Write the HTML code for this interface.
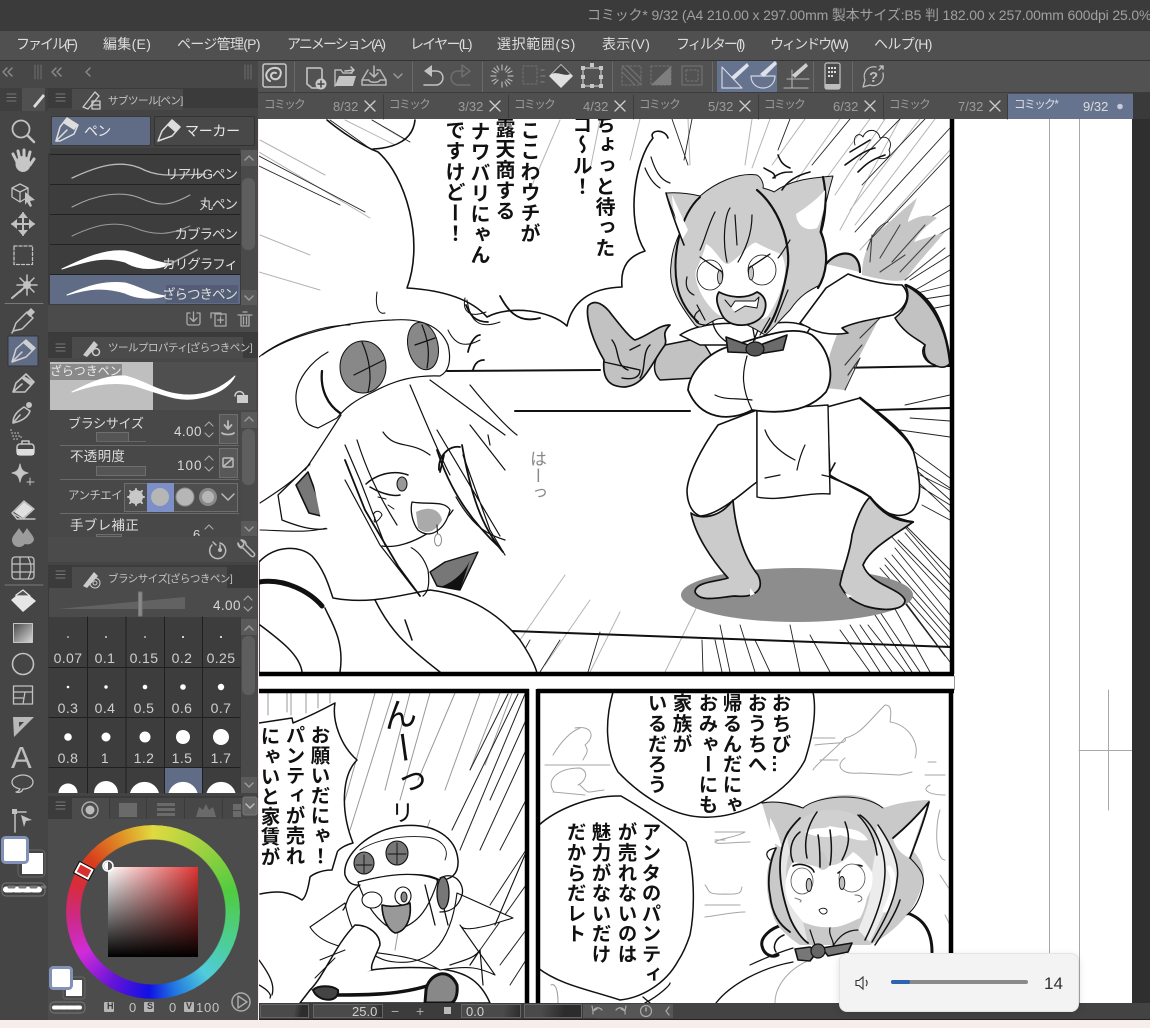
<!DOCTYPE html>
<html lang="ja"><head><meta charset="utf-8"><title>CLIP STUDIO PAINT</title>
<style>
html,body{margin:0;padding:0;background:#f7eeec}
#r{position:relative;width:1150px;height:1028px;overflow:hidden;background:#f7eeec;font-family:"Liberation Sans","Noto Sans CJK JP",sans-serif}
#r div{position:absolute;white-space:nowrap}
.b{box-sizing:border-box}
.t{color:#d8d8d8;line-height:1;transform-origin:0 50%}
.m{top:37px;font-size:14px;color:#dcdcdc}
.tb{top:100px;font-size:11.500px;letter-spacing:-1.400px;color:#9c9c9c}
.tn{top:100px;font-size:13px;letter-spacing:0;color:#9c9c9c}
.ph{font-size:10.500px;color:#c4c4c4;letter-spacing:-.5px}
.br{left:60px;width:177px;text-align:right;font-size:13.500px;letter-spacing:-1px;color:#dedede}
.n{font-size:14px;color:#cfcfcf;width:38px;text-align:center;letter-spacing:.4px}
.v{writing-mode:vertical-rl;font-family:"Liberation Sans","Noto Sans CJK JP",sans-serif;font-weight:700;color:#111;line-height:24px;width:24px}
.p1{font-size:20px;letter-spacing:.6px}
.p2{font-size:19.500px;letter-spacing:.6px}
.p3{font-size:19.500px;letter-spacing:.8px}
</style></head><body>
<div id="r">

<!-- chrome backgrounds -->
<div style="left:0;top:0;width:1150px;height:31px;background:#3b3b3b"></div>
<div style="left:0;top:31px;width:1150px;height:29px;background:#505050"></div>
<div style="left:0;top:60px;width:1150px;height:1px;background:#333"></div>
<div style="left:0;top:61px;width:258px;height:27px;background:#474747"></div>
<div style="left:258px;top:61px;width:892px;height:32px;background:#525252"></div>
<div style="left:258px;top:93px;width:892px;height:26px;background:#4f4f4f"></div>
<div style="left:1133px;top:93px;width:17px;height:26px;background:#3a3a3a"></div>

<!-- CANVAS -->
<div style="left:259px;top:119px;width:873px;height:884px;overflow:hidden;background:#fff">
<div style="left:-259px;top:-119px;width:1150px;height:1028px">
<svg width="1150" height="1028" viewBox="0 0 1150 1028" style="position:absolute;left:0;top:0" fill="none" stroke="#111" stroke-linejoin="round" stroke-linecap="round">
<!-- guides -->
<g stroke="#a8a8a8" stroke-width="1"><path d="M1049.500 119V1003M1079.500 119V1003M1108.500 690V810M1079 750.500H1132"/><path d="M954.500 676V690" stroke="#999"/></g>

<!-- PANEL 1 speed lines -->
<g stroke="#b4b4b4" stroke-width="1">
<path d="M260 140L325 175M259 152L370 218M260 235L310 255M259 272L320 290M372 120L405 140M345 120L395 145M560 120L530 190M600 120L590 170M640 119L630 160M688 119L690 165M752 119L745 165M770 119L752 168M805 119L772 165M840 119L790 190M900 119L840 230M920 119L850 210M950 150L860 250M565 575L520 640M590 600L545 665M705 590L665 672M620 612L590 672M870 119L825 180M885 119L835 195M935 119L855 225"/>
</g>
<g stroke="#222" stroke-width=".9">
<path d="M259 156L365 212M259 166L340 205M330 120L372 150M372 120L410 142M672 119L688 165M692 119L684 160M790 119L778 150M850 119L812 165M900 119L860 160M925 119L862 185M950 128L855 232M950 155L870 240M950 205L895 240M950 228L905 255M950 255L910 280M950 270L905 296M950 285L905 296M950 295L905 302M950 305L900 315M950 395L905 405M950 421L910 418M950 437L900 430M912 450L950 478M920 475L950 490M905 460L950 500M905 470L950 512M922 505L950 520M915 465L950 488M910 480L950 505M900 520L950 570M905 533L950 585M890 535L950 600M895 548L950 615M885 558L950 632M880 568L948 646M895 590L945 656M890 600L930 672M880 612L920 672M868 625L905 672M850 625L880 672M840 630L870 672M810 635L830 672M790 625L800 672M755 640L770 672M740 625L755 672M720 625L730 672M715 640L722 672M702 640L703 672M600 632L588 672M560 640L540 672M530 640L512 672M905 527L950 578M898 540L950 592M892 555L950 625M885 565L950 640M900 595L950 662M875 615L912 672M860 625L892 672"/>
</g>
<!-- wall & floor lines -->
<g stroke="#111" stroke-width="2">
<path d="M447 371L600 370M515 411L690 411M835 368L950 366M835 411L950 408" stroke-width="2"/>
<path d="M512 631L950 647" stroke-width="2"/>
</g>

<!-- panel-1 balloon -->
<path d="M327 120C345 135 365 147 378 152C405 175 425 240 407 288C440 290 470 298 487 317C510 305 550 310 567 326C572 302 590 288 622 287C620 265 630 256 645 251C625 220 635 160 653 138C648 130 665 128 668 138" stroke-width="1.600"/>
<path d="M373 149C395 148 413 140 415 120" stroke-width="1.600"/>
<path d="M377 292C375 305 378 315 385 313M465 298C462 312 470 318 486 312" stroke-width="1"/>

<!-- left girl (body) -->
<path d="M259 562C275 545 300 545 312 556C325 570 330 590 333 598C370 605 400 595 430 590C470 595 500 615 520 640C530 655 535 665 537 673L259 673Z" fill="#fff" stroke-width="1.500"/>
<path d="M259 582C285 578 310 592 322 606" stroke-width="5"/>
<path d="M260 625C280 640 300 655 302 672M340 672C345 640 330 620 325 608M375 600C390 630 405 645 440 672M405 620L412 640" stroke-width="1.500"/>
<path d="M478 552L445 562L430 572L437 586L460 590Z" fill="#777" stroke-width="1.400"/>
<path d="M440 587C455 582 466 570 470 560L460 590Z" fill="#111" stroke="none"/>
<path d="M382 546C400 540 420 545 428 570C430 585 428 592 423 596" stroke-width="1.200"/>
<!-- headphone -->
<path d="M278 495L310 464C320 490 335 510 337 525C320 535 295 525 282 520Z" fill="#fff" stroke-width="1.300"/>
<path d="M296 485L308 472L325 517L309 513Z" fill="#777" stroke-width="1.600"/>
<path d="M260 503C280 490 295 480 310 464M260 530C280 530 310 535 337 525" stroke-width="1.100"/>
<!-- hair & face -->
<path d="M336 412L310 465L322 525L380 565C410 550 440 530 456 505L495 505L430 400Z" fill="#fff" stroke="none"/>
<path d="M341 415C325 440 312 460 305 470M345 480L380 545L415 590M345 445L360 480L385 545M357 440C365 465 375 490 397 525M383 432C395 450 410 440 430 455M410 385C425 420 437 450 450 475M437 430L500 536M470 385C490 410 510 430 517 435M430 380L505 435M488 435L490 445M470 425L505 470M463 455L490 530L505 555M456 497C475 530 490 535 505 540" stroke-width="1.200"/>
<path d="M345 460L365 510L398 566L420 596M437 450C450 490 470 520 500 548M462 445C470 490 480 525 503 552" stroke-width="1.800"/>
<path d="M382 546C405 550 440 530 453 510" stroke-width="1.300"/>
<!-- eye, mouth -->
<path d="M366 484C378 473 395 470 408 475M370 487C378 492 392 497 400 495" stroke-width="1.500"/>
<ellipse cx="402" cy="484" rx="5" ry="7" fill="#999" stroke-width="1"/>
<path d="M439 470C438 455 450 445 460 447M440 472L444 455" stroke-width="1.800"/>
<path d="M412 502C428 505 445 500 450 510C445 530 430 540 418 530C412 522 410 510 412 502Z" fill="#fff" stroke-width="1.300"/>
<path d="M416 512C430 505 440 510 442 520C435 533 425 535 418 528Z" fill="#aaa" stroke="none"/>
<path d="M437 525L438 545" stroke-width="1"/><ellipse cx="438" cy="540" rx="3.500" ry="6" fill="#fff" stroke="#888" stroke-width="1"/>
<path d="M375 518C370 512 380 508 382 515C378 522 372 525 375 518M388 505L394 509M378 497L386 499" stroke-width="1"/>
<!-- hat -->
<path d="M262 355C290 335 340 322 392 320C420 318 440 325 448 345C452 362 448 372 440 376C415 375 395 380 373 392C355 400 345 408 337 418L318 428C305 425 295 415 296 395C297 380 310 362 328 352" fill="#fff" stroke-width="1.200"/>
<path d="M259 357C280 340 320 325 350 325" stroke-width="1"/>
<ellipse cx="363" cy="367" rx="23" ry="26" fill="#888" stroke-width="1"/>
<ellipse cx="423" cy="346" rx="15" ry="24" fill="#888" stroke-width="1" transform="rotate(-12 423 346)"/>
<path d="M354 375L384 360M362 342C370 360 372 378 368 392M415 345L435 338M422 325C428 340 430 352 427 368" stroke-width="1.200"/>
<path d="M322 371C320 390 328 405 340 413" stroke-width="2.300"/>
<path d="M448 330C455 345 465 348 480 340M467 300C470 320 478 330 500 322" stroke-width="1"/>
<path d="M466 305C470 315 475 322 488 322M468 352C470 342 476 335 480 335M473 370C475 362 480 360 484 360" stroke-width="1.800"/>
<path d="M500 296C505 305 515 325 540 318" stroke-width="1.800"/>

<!-- RIGHT CAT GIRL -->
<ellipse cx="797" cy="595" rx="116" ry="27" fill="#8d8d8d" stroke="none"/>
<!-- tail -->
<path d="M862 275C862 260 866 245 878 232C888 224 900 212 917 198C912 212 908 218 908 222C920 215 930 214 937 218C926 226 918 234 914 242C925 238 935 236 945 232C930 250 918 262 905 280C895 282 885 280 875 278Z" fill="#c6c6c6" stroke="none"/>
<path d="M867 250C872 235 878 225 888 222M880 258L900 225M892 262L925 225M900 272L935 235M880 272L905 255M870 262L872 235M905 280L945 248" stroke="#444" stroke-width="1.100"/>
<path d="M826 264C840 248 860 250 860 272" fill="#c6c6c6" stroke-width="2.200"/>
<!-- back -->
<path d="M843 320L885 305C875 330 855 360 845 390L825 388C825 360 835 340 843 320Z" fill="#bfbfbf" stroke="none"/>
<path d="M848 325L878 312M860 338L880 318M845 365L862 345M848 375L860 358M845 390L860 358" stroke="#333" stroke-width="1.100"/>
<!-- arm right -->
<path d="M826 288L848 274C870 282 890 285 902 285C912 295 906 308 893 315C870 320 855 322 842 328C845 331 848 333 848 333C830 336 815 333 800 323Z" fill="#fff" stroke-width="1.600"/>
<path d="M905 285C925 295 945 320 950 362C950 365 945 368 940 367C930 365 922 358 925 345C920 340 905 335 895 318C905 310 912 297 905 285Z" fill="#c2c2c2" stroke-width="1.600"/>
<path d="M906 285C930 295 945 320 950 362" stroke-width="2.500"/>
<path d="M925 345C920 352 924 362 935 365" stroke-width="1.600"/>
<!-- legs -->
<path d="M718 425C700 450 688 475 687 490C687 500 690 512 700 516C720 515 745 490 757 482L757 410Z" fill="#fff" stroke-width="1.600"/>
<path d="M827 407L860 398C885 420 905 435 913 450C920 475 922 495 916 505C910 520 885 520 870 497C855 488 840 482 830 475Z" fill="#fff" stroke-width="1.600"/>
<path d="M860 398C885 418 905 432 913 450" stroke-width="2.500"/>
<path d="M835 463L828 476C840 482 860 488 870 497" stroke-width="1.600"/>
<!-- apron -->
<path d="M757 410L757 497C780 502 805 492 830 494L828 405Z" fill="#fff" stroke-width="1.400"/>
<path d="M765 430C770 445 785 455 795 460M805 445C800 455 798 465 797 470M765 478L780 475M822 475L835 478" stroke-width="1.200"/>
<!-- boots -->
<path d="M691 513C700 520 720 518 733 500C735 525 742 555 758 575C765 590 755 598 735 596C720 597 700 603 695 592C695 582 715 582 728 578C712 560 695 535 691 513Z" fill="#cbcbcb" stroke-width="1.700"/>
<path d="M870 497C880 512 895 522 913 522C895 535 870 548 863 565C870 585 900 588 905 600C905 610 885 612 865 606C850 600 845 595 840 585C842 570 850 555 852 535C856 520 862 505 870 497Z" fill="#cbcbcb" stroke-width="1.700"/>
<path d="M870 497C880 510 895 520 913 522" stroke-width="2.300"/>
<path d="M750 588L755 594L750 596ZM845 593L848 598L852 596Z" fill="#fff" stroke="none"/>
<!-- left arm, hand -->
<path d="M665 345L700 338C705 345 712 355 714 362L695 378L660 380C650 370 655 355 665 345Z" fill="#c2c2c2" stroke-width="1.500"/>
<path d="M588 306C595 298 605 305 612 315C620 325 630 338 635 340C650 335 658 325 670 325C660 335 668 338 665 345C650 365 645 385 625 387C610 387 602 380 604 360C595 345 585 320 588 306Z" fill="#c2c2c2" stroke-width="1.700"/>
<path d="M612 340C620 350 615 365 628 370M604 362L640 370C640 378 632 380 622 378M650 345C642 352 646 370 640 378M640 345L630 350" stroke-width="1.400"/>
<!-- chest and collar -->
<path d="M680 335C700 322 730 322 760 325C780 322 795 320 810 328L800 345H700Z" fill="#fff" stroke-width="1.500"/>
<path d="M688 390C690 370 710 350 735 345C765 335 795 325 812 335C830 350 835 375 826 392C810 410 785 415 752 410C730 422 700 420 688 390Z" fill="#fff" stroke-width="1.800"/>
<path d="M747 356C743 370 740 385 752 410M715 395C725 400 735 398 752 400" stroke-width="1.200"/>
<path d="M716 312C705 325 725 345 735 345M751 318L755 340M760 325L752 345" stroke-width="1.300"/>
<!-- hair -->
<path d="M666 193C680 192 692 194 700 196C715 183 738 172 757 175C762 178 764 185 763 188C770 190 775 192 774 192C790 180 810 178 833 176C826 200 823 215 820 232C828 250 828 270 820 285C810 290 800 295 790 310C780 320 772 330 765 335C745 322 725 315 715 320C705 325 700 330 695 325C680 305 668 288 671 265C672 250 678 235 682 230C675 218 670 205 666 193Z" fill="#cdcdcd" stroke-width="1"/>
<path d="M700 197C680 215 672 255 677 285C680 302 690 315 698 322" stroke-width="2"/>
<path d="M757 190C775 205 790 235 788 265C785 285 778 315 765 332" stroke-width="2.200"/>
<path d="M823 177C827 195 826 215 821 232C830 255 826 275 818 288" stroke-width="2.200"/>
<path d="M796 214C810 205 818 198 825 190C825 205 822 220 817 228C805 232 797 225 796 214Z" fill="#fff" stroke="none"/>
<path d="M672 195L688 230L682 240C678 225 672 210 672 195Z" fill="#fff" stroke="none"/>
<path d="M666 193C672 215 680 235 684 245" stroke-width="1.600"/>
<!-- face -->
<path d="M706 244C715 248 722 265 728 264C740 258 752 240 757 243C772 252 782 252 783 258C790 275 778 300 768 316C755 325 725 322 715 312C702 300 693 280 696 270C700 262 704 252 706 244Z" fill="#fff" stroke="none"/>
<path d="M727 262C722 240 725 215 730 208M738 262C745 250 752 235 752 215M735 215L737 245M700 250C705 240 708 225 715 212M790 240C784 250 780 256 778 258M788 290L775 322M770 318L760 335M697 305L705 320" stroke-width="1.200"/>
<ellipse cx="710" cy="275" rx="13" ry="15" fill="#fff" stroke-width=".8"/>
<ellipse cx="762" cy="270" rx="14" ry="15" fill="#fff" stroke-width=".8"/>
<ellipse cx="720" cy="277" rx="2.500" ry="7" fill="#c6c6c6" stroke-width=".8"/>
<ellipse cx="751" cy="273" rx="2.500" ry="7" fill="#c6c6c6" stroke-width=".8"/>
<path d="M700 257L722 272M749 268L770 254" stroke-width="1.300"/>
<path d="M719 292C728 297 745 300 757 292C766 296 768 305 763 315C755 327 730 330 722 315C717 305 715 298 719 292Z" fill="#cdcdcd" stroke-width="1.800"/>
<path d="M725 300L731 307L735 301L755 301L759 297L757 308L745 306L735 312" fill="#fff" stroke-width="1"/>
<path d="M687 277C685 285 687 292 694 295" stroke-width="1.200"/>
<path d="M700 310C690 316 695 325 705 325" stroke-width="1.200"/>
<!-- bow -->
<path d="M726 337L748 345L752 353L728 352Z" fill="#6b6b6b" stroke-width="1.600"/>
<path d="M787 335L760 345L758 354L783 350Z" fill="#6b6b6b" stroke-width="1.600"/>
<ellipse cx="755" cy="349" rx="9" ry="7" fill="#555" stroke-width="1.200"/>
<!-- anger puff & marks -->
<path d="M855 145C852 135 860 132 863 137C866 128 878 128 880 138C888 135 893 142 889 150C893 158 882 160 878 158" stroke-width=".9"/>
<path d="M845 165C855 158 865 150 875 148M858 172C865 165 870 160 885 155M850 152L870 140" stroke-width="1.600"/>
<path d="M778 155C780 160 782 165 790 168M764 168C770 172 775 172 775 178M782 190C788 180 798 175 810 172M773 178C780 172 786 172 792 172" stroke-width="1.600"/>
<path d="M651 157C655 170 660 180 670 183M645 168C650 180 655 185 660 188" stroke-width="1.200"/>

<!-- panel 1 borders -->
<path d="M952 119V674M259 674H954" stroke="#000" stroke-width="4.500" stroke-linecap="butt"/>

<!-- PANEL 2 -->
<g stroke="#999" stroke-width="1"><path d="M268 693V715M287 693V712M291 693V715M306 693V713M318 693V708M330 693V703M375 693L345 800M393 693L350 830M410 693L385 790M430 693L400 800M455 693L418 780M480 693L445 790M500 693L470 770M512 693L485 765M430 820L405 890L395 950"/></g>
<g stroke="#222" stroke-width="1"><path d="M525 694L460 850M518 694L452 830M508 694L470 770M526 720L490 800M526 750L480 850M526 800L500 850M526 850L490 905M526 885L480 950M526 930L500 965M526 960L510 985"/></g>
<path d="M259 723L292 718L293 723C310 716 322 710 335 703C332 720 340 745 357 760C342 775 340 810 353 843C345 845 337 850 337 853L332 870C320 870 312 875 310 877C308 890 305 898 302 900C290 892 280 890 260 894" stroke-width="1.500" fill="#fff"/>
<path d="M259 960C270 975 275 985 272 995M259 985C268 990 272 995 270 998" stroke-width="1.300"/>
<!-- girl 2 -->
<path d="M310 990C340 975 370 965 430 968C465 970 480 980 490 1003H300Z" fill="#fff" stroke-width="1.500"/>
<path d="M310 927L345 903C352 940 370 960 395 962C425 965 450 950 457 893L513 918L490 925C470 930 462 930 460 925L495 975C480 968 470 965 440 970C400 945 330 960 310 927Z" fill="#fff" stroke-width="1.100"/>
<path d="M345 875C342 855 370 830 400 826C435 822 456 838 458 860C459 875 450 880 440 880C420 870 395 875 360 885C350 886 347 880 345 875Z" fill="#fff" stroke-width="1.500"/>
<path d="M360 850C375 840 400 835 425 837C440 838 450 848 445 860" stroke-width=".9"/>
<ellipse cx="364" cy="863" rx="10" ry="11" fill="#777" stroke-width="1.100"/>
<ellipse cx="397" cy="853" rx="11" ry="12" fill="#777" stroke-width="1.100"/>
<path d="M356 865H372M364 855V873M388 854H406M397 843V864" stroke-width=".9"/>
<path d="M358 882C365 905 380 925 395 930C420 925 430 905 438 880C415 870 385 875 358 882Z" fill="#fff" stroke-width="1.200"/>
<ellipse cx="372" cy="900" rx="10" ry="8" fill="#fff" stroke-width="1.100"/>
<ellipse cx="403" cy="896" rx="8" ry="9" fill="#fff" stroke-width="1.100"/>
<ellipse cx="404" cy="897" rx="3" ry="5" fill="#888" stroke-width="1"/>
<path d="M382 905C392 908 405 905 410 903C412 920 405 932 395 933C388 930 382 918 382 905Z" fill="#999" stroke-width="1.600"/>
<path d="M437 880L448 925M425 885L435 925M360 885C345 895 348 905 343 910" stroke-width="1.300"/>
<ellipse cx="443" cy="893" rx="6" ry="16" fill="#777" stroke-width="1.300"/>
<path d="M440 878C455 870 465 885 462 895C458 908 450 912 440 912" stroke-width="1.300"/>
<path d="M310 990C325 975 335 945 355 925C370 925 380 935 380 945C375 958 370 965 372 970" fill="#fff" stroke-width="1.500"/>
<path d="M315 978L335 958M320 960L345 950" stroke-width="1"/>
<path d="M527 850L495 925" stroke-width="1.100"/>
<path d="M338 995C365 995 400 995 430 985" stroke-width="3.500"/>
<path d="M313 990C318 1003 340 1003 338 990C332 985 318 985 313 990Z" fill="#444" stroke-width="2"/>
<path d="M426 990C428 975 448 965 457 985C458 995 455 1003 450 1003H425Z" fill="#888" stroke-width="3"/>
<path d="M470 965L480 950L483 985M450 965C465 960 475 958 480 950" stroke-width="1.200"/>

<path d="M527 689V1004M259 691H529" stroke="#000" stroke-width="4.500" stroke-linecap="butt"/>

<!-- PANEL 3 -->
<g stroke="#a5a5a5" stroke-width="1">
<path d="M575 728C590 725 597 735 585 745C590 752 585 755 583 760M553 755C565 735 575 730 580 728M545 765L610 765M554 792C545 780 558 768 580 768C590 772 585 782 578 785M553 792L585 795M580 785C590 795 585 792 604 790"/>
<path d="M815 745C835 742 848 745 845 738C860 735 868 722 885 705C890 705 892 708 890 722C910 725 920 745 915 758M813 770C815 765 840 745 845 738M845 758C835 765 840 775 860 773L900 775L912 772M813 738H835M820 760H838M928 762L936 762M925 775L945 775M930 785C920 790 930 795 945 795M715 832H745C735 838 720 838 715 842C715 845 735 842 750 842M715 840L725 840M705 885C710 890 705 895 725 894C745 895 740 890 742 887M705 905H740M705 917C720 915 735 912 745 912M940 810C935 825 935 860 945 860M940 875L950 890M945 915L950 925"/>
</g>
<!-- balloon A -->
<path d="M613 692C605 720 605 750 618 772C640 795 670 815 700 817C745 820 790 790 805 760C813 735 817 712 813 692" fill="#fff" stroke-width="1.500"/>
<!-- balloon B -->
<path d="M538 826C555 810 590 795 621 796C645 810 668 825 686 842C695 870 695 910 690 935C685 950 680 958 678 961C665 985 640 998 620 1000C590 990 560 985 538 968" fill="#fff" stroke-width="1.500"/>

<!-- cat girl 2 -->
<!-- curls -->
<path d="M783 925C770 928 760 938 762 946C764 955 772 958 778 955" stroke-width="3"/>
<path d="M784 935C776 938 772 946 776 952" stroke-width="1.500"/>
<path d="M907 913C922 918 932 930 932 952" stroke-width="3"/>
<!-- main hair -->
<path d="M762 803C778 802 795 804 803 808C815 797 860 785 883 808C895 804 912 800 930 800C922 825 915 845 914 852C922 860 925 872 923 880C920 895 915 905 907 915C895 930 880 940 870 945L800 945C785 935 775 925 772 912C766 895 765 875 770 860C771 855 773 852 776 848C772 835 766 818 762 803Z" fill="#c9c9c9" stroke="none"/>
<path d="M803 808C815 797 860 790 883 808" stroke-width="1"/>
<!-- ears white -->
<path d="M770 818C775 825 780 840 782 848L774 843C770 835 770 825 770 818Z" fill="#fff" stroke="none"/>
<path d="M928 803C920 825 913 845 910 858C902 855 895 848 893 838C905 828 918 815 928 803Z" fill="#fff" stroke="none"/>
<path d="M893 838C905 828 918 815 929 802M929 802C923 825 915 845 910 858" stroke-width="1.800"/>
<path d="M762 803C778 800 795 805 803 808" stroke-width="1.200"/>
<!-- hair locks -->
<path d="M788 832C778 850 776 885 790 918C795 930 803 940 808 943L803 922C795 912 788 895 786 878C786 860 790 845 800 835Z" fill="#e6e6e6" stroke="none"/>
<path d="M877 825C890 845 898 860 897 872C896 890 885 910 870 942L858 930C870 905 872 885 872 872Z" fill="#ececec" stroke="none"/>
<path d="M889 868C897 880 893 895 885 910" stroke="#fff" stroke-width="5"/>
<!-- bangs -->
<path d="M787 835C795 820 810 812 825 810C845 808 865 815 877 838C877 850 873 862 872 872C865 862 858 855 853 852C845 860 838 866 830 865C825 855 820 840 818 867C808 864 800 863 793 862C790 855 788 845 787 835Z" fill="#d0d0d0" stroke="none"/>
<path d="M805 832C815 826 825 830 830 826C845 830 860 826 868 840C860 842 850 838 840 835C830 838 815 838 805 832Z" fill="#fff" stroke="none"/>
<!-- face -->
<path d="M793 862C800 863 808 864 818 867C822 872 826 870 830 865C838 866 845 860 853 852C860 856 867 864 872 872C874 885 870 892 867 898C865 908 862 915 860 918C845 925 838 928 830 927C820 928 810 925 803 922C795 912 789 905 787 898C783 885 787 870 793 862Z" fill="#fff" stroke="none"/>
<!-- line work -->
<path d="M776 848C770 860 767 880 770 895C772 915 780 925 790 932M788 832C778 850 776 880 790 918C795 930 803 940 808 943M800 818C790 828 785 835 782 848" stroke-width="1.800"/>
<path d="M817 812C808 825 803 840 807 858M818 835C820 845 820 858 820 867M830 830C832 845 832 855 830 865M845 822C850 835 850 845 842 860M860 815C875 825 885 850 885 870C885 895 875 920 865 940M878 825C892 845 900 865 897 880C895 900 885 920 872 942M858 815C868 825 875 838 877 855M793 862C788 850 792 838 800 832M900 900C895 915 885 930 875 945" stroke-width="1.500"/>
<path d="M770 860C765 855 765 850 776 848" stroke-width="1.200"/>
<path d="M910 858C920 868 925 875 923 885C920 900 915 908 907 915" stroke-width="1.100"/>
<path d="M793 866C800 862 812 866 814 872M862 866C853 863 845 868 838 873" stroke-width="1.600"/>
<ellipse cx="802" cy="881" rx="11" ry="13" fill="#fff" stroke="#555" stroke-width=".8"/>
<ellipse cx="852" cy="878" rx="13" ry="14" fill="#fff" stroke="#555" stroke-width=".8"/>
<ellipse cx="809" cy="885" rx="2.800" ry="6.500" fill="#c0c0c0" stroke-width=".9"/>
<ellipse cx="842" cy="883" rx="2.800" ry="6.500" fill="#c0c0c0" stroke-width=".9"/>
<path d="M819 910C822 907 828 908 827 912C825 915 821 915 819 910Z" stroke-width=".9"/>
<path d="M795 898C800 900 803 900 800 902M855 895C862 895 865 900 858 902" stroke="#666" stroke-width=".9"/>
<!-- collar/chest -->
<path d="M750 965C765 958 780 952 793 948M830 928C828 935 835 942 833 946C838 938 845 930 858 930M810 930L815 945" stroke-width="1.200"/>
<path d="M716 1003C730 985 760 968 800 960L850 955C880 945 905 945 930 975L930 1003Z" fill="#fff" stroke="none"/>
<path d="M716 1003C730 985 760 968 793 962" stroke-width="1.300"/>
<path d="M775 1003C775 985 790 968 810 960" stroke="#aaa" stroke-width="1"/>
<path d="M795 949L810 947L817 952L810 961L798 960Z" fill="#777" stroke-width="1.600"/>
<path d="M852 943L848 952L828 956L822 948Z" fill="#777" stroke-width="1.600"/>
<ellipse cx="818" cy="951" rx="7" ry="7" fill="#666" stroke-width="1.200"/>
<path d="M645 1003C660 995 670 985 670 983M643 997L650 1003" stroke-width="1.300"/>
<path d="M551 985C558 982 558 1000 558 1003" stroke="#999" stroke-width="1"/>
<path d="M951 689V1004M537 691H954M538 689V1004" stroke="#000" stroke-width="4.500" stroke-linecap="butt"/>
</svg>

<!-- Panel text -->
<div class="v p1" style="left:591px;top:114px">ちょっと待った</div>
<div class="v p1" style="left:568px;top:114px">コ～ル！</div>
<div class="v p1" style="left:516px;top:120px">ここわウチが</div>
<div class="v p1" style="left:491px;top:118px">露天商する</div>
<div class="v p1" style="left:466px;top:121px">ナワバリにゃん</div>
<div class="v p1" style="left:441px;top:120px">ですけどー！</div>
<div class="v" style="left:526px;top:450px;font-size:17px;font-weight:400;color:#888;line-height:20px;width:20px">はーっ</div>

<div class="v p2" style="left:306px;top:725px">お願いだにゃ！</div>
<div class="v p2" style="left:281px;top:725px">パンティが売れ</div>
<div class="v p2" style="left:256px;top:726px">にゃいと家賃が</div>
<div class="v" style="left:379px;top:697px;font-size:34px;font-weight:400;line-height:44px;width:44px;transform:rotate(-8deg)">んーっ</div>
<div class="v" style="left:385px;top:800px;font-size:24px;font-weight:400;line-height:28px;width:28px">リ</div>

<div class="v p3" style="left:767px;top:693px">おちび…</div>
<div class="v p3" style="left:743px;top:693px">おうちへ</div>
<div class="v p3" style="left:718px;top:693px">帰るんだにゃ</div>
<div class="v p3" style="left:694px;top:693px">おみゃーにも</div>
<div class="v p3" style="left:668px;top:693px">家族が</div>
<div class="v p3" style="left:643px;top:693px">いるだろう</div>
<div class="v p3" style="left:637px;top:822px">アンタのパンティ</div>
<div class="v p3" style="left:613px;top:822px">が売れないのは</div>
<div class="v p3" style="left:587px;top:822px">魅力がないだけ</div>
<div class="v p3" style="left:562px;top:822px">だからだレト</div>
</div></div>
<div style="left:1132px;top:119px;width:18px;height:884px;background:#2f2f2f"></div>

<!-- Status bar -->
<div style="left:259px;top:1003px;width:891px;height:16px;background:#3c3c3c"></div>
<div style="left:597px;top:1003px;width:553px;height:16px;background:#434343"></div>
<div style="left:259px;top:1019px;width:891px;height:1px;background:#222"></div>
<div style="left:583px;top:1004px;width:90px;height:14px;background:#565656"></div>
<div class="b" style="left:260px;top:1004px;width:49px;height:14px;border:1px solid #666;background:linear-gradient(100deg,#4a4a4a 70%,#2c2c2c 85%)"></div>
<div class="b" style="left:313px;top:1004px;width:70px;height:14px;border:1px solid #666;background:linear-gradient(100deg,#4a4a4a 80%,#2c2c2c)"></div>
<div class="b" style="left:461px;top:1004px;width:60px;height:14px;border:1px solid #666;background:linear-gradient(100deg,#4a4a4a 70%,#2c2c2c)"></div>
<div class="b" style="left:524px;top:1004px;width:58px;height:14px;border:1px solid #666;background:linear-gradient(100deg,#4a4a4a 30%,#2c2c2c 70%)"></div>
<div class="t" style="left:352px;top:1005px;font-size:13px;color:#d0d0d0">25.0</div>
<div class="t" style="left:391px;top:1004px;font-size:14px;color:#aaa">−</div>
<div class="t" style="left:416px;top:1004px;font-size:14px;color:#aaa">+</div>
<div style="left:444px;top:1007px;width:7px;height:7px;background:#bbb"></div>
<div class="t" style="left:466px;top:1005px;font-size:13px;color:#d0d0d0">0.0</div>

<!-- Left panels -->
<div style="left:0;top:88px;width:48px;height:932px;background:#454545"></div>
<div style="left:48px;top:88px;width:210px;height:932px;background:#3a3a3a"></div>
<div style="left:0;top:88px;width:48px;height:23px;background:#3f3f3f"></div>
<div style="left:22px;top:88px;width:23px;height:23px;background:#505050"></div>
<div style="left:48px;top:88px;width:210px;height:22px;background:#3b3b3b"></div>
<div style="left:48px;top:108px;width:210px;height:45px;background:#444"></div>
<div style="left:72px;top:89px;width:111px;height:21px;background:#4b4b4b"></div>
<div class="b" style="left:51px;top:116px;width:100px;height:30px;background:#606c86;border:1px solid #3a3a3a;border-radius:2px"></div>
<div class="b" style="left:154px;top:116px;width:101px;height:30px;background:#484848;border:1px solid #333;border-radius:2px"></div>
<div class="t" style="left:84px;top:124px;font-size:14px;letter-spacing:-.8px;color:#e8e8e8">ペン</div>
<div class="t" style="left:185px;top:124px;font-size:14px;letter-spacing:-.3px;color:#e8e8e8">マーカー</div>
<div class="t ph" style="left:108px;top:96px">サブツール[ペン]</div>

<!-- sub tool list -->
<div style="left:50px;top:148px;width:190px;height:157px;background:#3d3d3d;overflow:hidden"></div>
<div style="left:50px;top:154px;width:190px;height:1px;background:#222"></div>
<div style="left:50px;top:184px;width:190px;height:1px;background:#222"></div>
<div style="left:50px;top:214px;width:190px;height:1px;background:#222"></div>
<div style="left:50px;top:244px;width:190px;height:1px;background:#222"></div>
<div style="left:50px;top:274px;width:190px;height:1px;background:#222"></div>
<div style="left:50px;top:275px;width:190px;height:29px;background:#606c86"></div>
<div style="left:241px;top:150px;width:17px;height:155px;background:#4a4a4a"></div>
<div style="left:241px;top:150px;width:16px;height:16px;background:#5a5a5a"></div>
<div style="left:241px;top:290px;width:16px;height:16px;background:#5a5a5a"></div>
<div style="left:242px;top:178px;width:13px;height:72px;background:#5e5e5e;border-radius:6px"></div>
<div style="left:48px;top:305px;width:210px;height:27px;background:#4b4b4b"></div>

<!-- Tool property -->
<div style="left:48px;top:336px;width:210px;height:22px;background:#3b3b3b"></div>
<div style="left:72px;top:337px;width:171px;height:22px;background:#4b4b4b"></div>
<div class="t ph" style="left:108px;top:343px">ツールプロパティ[ざらつきペン]</div>
<div style="left:48px;top:358px;width:210px;height:179px;background:#484848"></div>
<div style="left:50px;top:362px;width:206px;height:48px;background:#4f4f4f"></div>
<div style="left:50px;top:362px;width:103px;height:48px;background:#bfbfbf"></div>
<div style="left:50px;top:364px;width:72px;height:16px;background:#8a8a8a"></div>
<div class="t" style="left:50px;top:365px;font-size:12px;letter-spacing:-.1px;color:#ececec">ざらつきペン</div>
<div style="left:241px;top:412px;width:17px;height:124px;background:#4a4a4a"></div>
<div style="left:241px;top:412px;width:16px;height:16px;background:#5a5a5a"></div>
<div style="left:241px;top:521px;width:16px;height:15px;background:#5a5a5a"></div>
<div style="left:242px;top:429px;width:13px;height:56px;background:#5e5e5e;border-radius:6px"></div>
<div class="t" style="left:68px;top:417px;font-size:13px;letter-spacing:-.3px;color:#dcdcdc">ブラシサイズ</div>
<div class="t" style="left:70px;top:450px;font-size:13.500px;letter-spacing:.3px;color:#dcdcdc">不透明度</div>
<div class="t" style="left:68px;top:491px;font-size:11.500px;letter-spacing:-.6px;color:#c4c4c4">アンチエイリ</div>
<div class="t" style="left:70px;top:519px;font-size:13.500px;letter-spacing:.3px;color:#dcdcdc">手ブレ補正</div>
<div style="left:60px;top:445px;width:179px;height:1px;background:#6a6a6a"></div>
<div style="left:60px;top:479px;width:179px;height:1px;background:#6a6a6a"></div>
<div style="left:60px;top:513px;width:179px;height:1px;background:#6a6a6a"></div>
<div class="b" style="left:96px;top:432px;width:33px;height:10px;background:#555;border:1px solid #6e6e6e"></div>
<div style="left:96px;top:441px;width:50px;height:1px;background:#666"></div>
<div class="b" style="left:96px;top:466px;width:50px;height:10px;background:#555;border:1px solid #6e6e6e"></div>
<div class="b" style="left:96px;top:534px;width:26px;height:3px;background:#4d4d4d;border:1px solid #6e6e6e"></div>
<div class="t" style="left:174px;top:425px;font-size:13.500px;letter-spacing:.4px;color:#d8d8d8">4.00</div>
<div class="t" style="left:177px;top:459px;font-size:13.500px;letter-spacing:1px;color:#d8d8d8">100</div>
<div class="t" style="left:193px;top:528px;font-size:13px;color:#d8d8d8;height:8px;overflow:hidden">6</div>
<div class="b" style="left:219px;top:414px;width:19px;height:30px;background:#585858;border:1px solid #6e6e6e"></div>
<div class="b" style="left:219px;top:448px;width:19px;height:30px;background:#585858;border:1px solid #6e6e6e"></div>
<div class="b" style="left:124px;top:483px;width:114px;height:29px;background:#4e4e4e;border:1px solid #6e6e6e"></div>
<div style="left:147px;top:483px;width:27px;height:29px;background:#7c8fc7"></div>
<div style="left:48px;top:537px;width:210px;height:25px;background:#4b4b4b"></div>

<!-- Brush size -->
<div style="left:48px;top:562px;width:210px;height:3px;background:#444"></div>
<div style="left:48px;top:565px;width:210px;height:23px;background:#3b3b3b"></div>
<div style="left:72px;top:567px;width:155px;height:21px;background:#4b4b4b"></div>
<div class="t ph" style="left:108px;top:574px">ブラシサイズ[ざらつきペン]</div>
<div style="left:49px;top:588px;width:209px;height:29px;background:#4b4b4b"></div>
<div class="t" style="left:213px;top:599px;font-size:13.500px;letter-spacing:.4px;color:#d8d8d8">4.00</div>
<div style="left:49px;top:617px;width:191px;height:176px;background:#3d3d3d"></div>
<div style="left:165px;top:768px;width:37px;height:25px;background:#606c86"></div>
<div style="left:241px;top:617px;width:17px;height:176px;background:#4a4a4a"></div>
<div style="left:241px;top:619px;width:16px;height:16px;background:#5a5a5a"></div>
<div style="left:241px;top:777px;width:16px;height:16px;background:#5a5a5a"></div>
<div style="left:242px;top:636px;width:13px;height:59px;background:#5e5e5e;border-radius:6px"></div>
<div class="t n" style="left:49px;top:651px">0.07</div><div class="t n" style="left:86px;top:651px">0.1</div><div class="t n" style="left:125px;top:651px">0.15</div><div class="t n" style="left:163px;top:651px">0.2</div><div class="t n" style="left:202px;top:651px">0.25</div>
<div class="t n" style="left:49px;top:701px">0.3</div><div class="t n" style="left:86px;top:701px">0.4</div><div class="t n" style="left:125px;top:701px">0.5</div><div class="t n" style="left:163px;top:701px">0.6</div><div class="t n" style="left:202px;top:701px">0.7</div>
<div class="t n" style="left:49px;top:751px">0.8</div><div class="t n" style="left:86px;top:751px">1</div><div class="t n" style="left:125px;top:751px">1.2</div><div class="t n" style="left:163px;top:751px">1.5</div><div class="t n" style="left:202px;top:751px">1.7</div>

<!-- Color panel -->
<div style="left:48px;top:793px;width:210px;height:3px;background:#444"></div>
<div style="left:48px;top:796px;width:210px;height:23px;background:#3b3b3b"></div>
<div style="left:72px;top:798px;width:37px;height:21px;background:#4b4b4b"></div>
<div style="left:110px;top:798px;width:36px;height:21px;background:#474747"></div>
<div style="left:147px;top:798px;width:37px;height:21px;background:#474747"></div>
<div style="left:185px;top:798px;width:37px;height:21px;background:#474747"></div>
<div style="left:223px;top:798px;width:35px;height:21px;background:#474747"></div>
<div style="left:48px;top:819px;width:210px;height:201px;background:#4c4c4c"></div>
<div style="left:66px;top:825px;width:174px;height:174px;border-radius:50%;background:conic-gradient(from 0deg,#e0da40 0deg,#9ad040 40deg,#50cc40 75deg,#4cce9c 115deg,#50ccdc 140deg,#2074e0 165deg,#1010e4 183deg,#6614d8 210deg,#d02cd8 240deg,#cc2a88 265deg,#d82c3a 290deg,#d83e1c 310deg,#e09a28 340deg,#e0da40 360deg);-webkit-mask:radial-gradient(circle,transparent 72px,#000 73px);mask:radial-gradient(circle,transparent 72px,#000 73px)"></div>
<div style="left:108px;top:867px;width:90px;height:90px;background:linear-gradient(to top,#000,rgba(0,0,0,0)),linear-gradient(to right,#fff,#e03434)"></div>

<!-- Tab strip text -->
<div class="t tb" style="left:264px">コミック</div><div class="t tn" style="left:333px">8/32</div>
<div class="t tb" style="left:389px">コミック</div><div class="t tn" style="left:458px">3/32</div>
<div class="t tb" style="left:514px">コミック</div><div class="t tn" style="left:583px">4/32</div>
<div class="t tb" style="left:639px">コミック</div><div class="t tn" style="left:708px">5/32</div>
<div class="t tb" style="left:764px">コミック</div><div class="t tn" style="left:833px">6/32</div>
<div class="t tb" style="left:889px">コミック</div><div class="t tn" style="left:958px">7/32</div>
<div style="left:1008px;top:94px;width:125px;height:25px;background:#66738f"></div>
<div class="t tb" style="left:1014px;color:#ddd">コミック*</div><div class="t tn" style="left:1083px;color:#ddd">9/32</div>
<div style="left:717px;top:61px;width:60px;height:32px;background:#66738f"></div>

<!-- ALL UI ICONS -->
<svg width="1150" height="1028" viewBox="0 0 1150 1028" style="position:absolute;left:0;top:0" fill="none" stroke="#bdbdbd" stroke-width="1.500" stroke-linecap="round" stroke-linejoin="round">
<defs><linearGradient id="g1" x1="0" y1="0" x2="1" y2="1"><stop offset="0" stop-color="#4a4a4a"/><stop offset="1" stop-color="#d8d8d8"/></linearGradient></defs>
<!-- collapse row -->
<path d="M7 68l-4 4 4 4M12 68l-4 4 4 4M56 68l-4 4 4 4M61 68l-4 4 4 4M90 68l-4 4 4 4" stroke="#8a8a8a"/>
<path d="M35 65v14M38 65v14M41 65v14M245 65v14M248 65v14M251 65v14" stroke="#6f6f6f" stroke-width="1"/>
<!-- hamburgers -->
<path d="M7 94h9M7 97.500h9M7 101h9M56 94h9M56 97.500h9M56 101h9M56 344h9M56 347.500h9M56 351h9M56 571h9M56 574.500h9M56 578h9M56 802h9M56 805.500h9M56 809h9" stroke="#777" stroke-width="1"/>
<!-- small tool header icons -->
<path d="M33 106L43 94L45 96L35 108Z" fill="#ddd" stroke="none"/>
<path d="M83 107L95 92L99 96L88 109ZM92 101h8v8h-8zM92 105h8" fill="none" stroke="#ccc" stroke-width="1.300"/>
<path d="M83 355L94 341L98 345L87 357Z" fill="#ccc" stroke="none"/><circle cx="96" cy="352" r="3.500" stroke="#ccc" stroke-width="1.500"/>
<path d="M83 586L94 572L98 576L87 588Z" fill="#ccc" stroke="none"/><circle cx="95" cy="583" r="5" stroke="#ccc" stroke-width="1"/><circle cx="95" cy="583" r="2" stroke="#ccc" stroke-width="1"/>
<!-- pen/marker sub tabs -->
<path d="M56 141L60 127L67 118L78 125L74 134L60 141Z" stroke="#ddd"/><path d="M56 141L67 130" stroke="#ddd"/><path d="M67 118L78 125L74 130L63 123Z" fill="#ddd" stroke="none"/>
<path d="M158 141L162 131L172 120L180 127L172 136Z" stroke="#ddd"/><path d="M167 125L172 120L180 127L175 132Z" fill="#ddd" stroke="none"/>
<!-- sub tool strokes -->
<path d="M72 178C100 165 120 160 140 168C155 176 165 176 205 174" stroke="#bbb" stroke-width="1.300"/>
<path d="M72 207C95 195 120 190 140 198C160 207 170 206 190 195" stroke="#aaa" stroke-width="1"/>
<path d="M72 236C95 225 115 220 135 228C155 236 170 235 190 226" stroke="#999" stroke-width="1"/>
<path d="M62 269C85 258 105 249 125 251C142 254 150 262 172 264C150 272 135 268 125 262C105 256 90 260 62 269Z" fill="#fff" stroke="#fff" stroke-width="1"/>
<path d="M172 263L197 250" stroke="#aaa" stroke-width="1.600"/>
<path d="M67 295C90 285 105 281 125 283C140 287 150 294 165 296C150 300 135 298 125 293C105 287 90 288 67 295Z" fill="#fff" stroke="#fff" stroke-width="1"/>
<path d="M165 295L192 288" stroke="#aaa" stroke-width="1.200"/>
<!-- scrollbar arrows -->
<path d="M245 160l4-4 4 4M245 296l4 4 4-4M245 421l4-4 4 4M245 527l4 4 4-4M245 630l4-4 4 4M245 783l4 4 4-4" stroke="#999" stroke-width="1.500"/>
<!-- footer icons -->
<path d="M187 313v10a2 2 0 002 2h9a2 2 0 002-2v-10h-3M190 313h-3M193.500 312v9M190 318l3.500 3.500 3.500-3.500" stroke="#aaa" stroke-width="1.300"/>
<path d="M211 318v-5h10v2M215 314h11v12h-11zM220.500 317v6M217.500 320h6" stroke="#aaa" stroke-width="1.300"/>
<path d="M238 315h14M241 315v11h8v-11M243 312h4M243.500 317v7M246.500 317v7" stroke="#aaa" stroke-width="1.300"/>
<!-- preview stroke -->
<path d="M72 392C95 380 110 375 125 376C145 380 160 395 190 395C210 395 225 385 235 376C225 395 195 402 175 398C150 392 135 384 125 384C105 382 90 386 72 392Z" fill="#fff" stroke="#fff" stroke-width="1"/>
<path d="M235 396a4.500 4.500 0 019 0" stroke="#ccc"/><rect x="237" y="395" width="11" height="8" fill="#ccc" stroke="none"/>
<!-- spinners -->
<path d="M205 426l4-4 4 4M205 433l4 4 4-4M205 460l4-4 4 4M205 467l4 4 4-4M205 529l4-4 4 4M244 600l4-4 4 4M244 607l4 4 4-4" stroke="#aaa" stroke-width="1.100"/>
<!-- buttons in props -->
<path d="M228 421v7M224.500 425l3.500 4 3.500-4M222 433c2 2 10 2 12 0" stroke="#bbb" stroke-width="1.800"/>
<rect x="223" y="458" width="10" height="9" rx="1" stroke="#bbb"/><path d="M224 466l8-7" stroke="#bbb"/>
<!-- AA -->
<circle cx="136" cy="497" r="7" fill="#c8c8c8" stroke="none"/><path d="M128 497h16M136 489v16M130 491l12 12M142 491l-12 12" stroke="#c8c8c8" stroke-width="2"/>
<circle cx="160" cy="497" r="9" fill="#b6b6b6" stroke="none"/>
<circle cx="185" cy="497" r="9" fill="#b6b6b6" stroke="#8b8b8b" stroke-width="1"/><circle cx="208" cy="497" r="9" fill="#8a8a8a" stroke="none"/><circle cx="208" cy="497" r="6" fill="#b6b6b6" stroke="none"/>
<path d="M222 494l6 6 6-6" stroke="#bbb"/>
<!-- clock & wrench -->
<path d="M212 545a8 8 0 108-2" stroke="#bbb"/><path d="M213 542l3 3" stroke="#bbb"/><circle cx="220" cy="550" r="2" fill="#bbb" stroke="none"/><path d="M220 549v-4" stroke="#bbb"/>
<path d="M238 543a4.500 4.500 0 005 5l8 8a2 2 0 003-3l-8-8a4.500 4.500 0 00-5-5l3 3-1 3-3 1z" stroke="#bbb"/>
<!-- slider wedge -->
<path d="M58 609L185 597V609Z" fill="#626262" stroke="none"/>
<rect x="138.500" y="592" width="3.500" height="24" fill="#8a8a8a" stroke="#777" stroke-width="1"/>
<!-- grid -->
<path d="M87.500 617v176M126 617v176M164.500 617v176M202.500 617v176M49 667.500h191M49 717.500h191M49 767.500h191" stroke="#1f1f1f" stroke-width="1"/>
<g fill="#fff" stroke="none">
<circle cx="68" cy="637" r=".8"/><circle cx="106" cy="637" r=".9"/><rect x="144" y="636.500" width="2" height="1"/><circle cx="183" cy="637" r="1"/><circle cx="221" cy="637" r="1"/>
<circle cx="68" cy="687" r="1.300"/><circle cx="106" cy="687" r="1.700"/><circle cx="145" cy="687" r="2.300"/><circle cx="183" cy="687" r="2.800"/><circle cx="221" cy="687" r="3.200"/>
<circle cx="68" cy="737" r="3.800"/><circle cx="106" cy="737" r="4.500"/><circle cx="145" cy="737" r="5.500"/><circle cx="183" cy="737" r="7"/><circle cx="221" cy="737" r="8"/>
<path d="M58.500 793a9.500 9.500 0 0119 0zM94 793a12 12 0 0124 0zM130 793a15 15 0 0129 0zM168.500 793a15 15 0 0129 0zM206.500 793a15 15 0 0129 0z"/>
</g>
<!-- color tab icons -->
<circle cx="90" cy="810" r="8" stroke="#aaa"/><circle cx="90" cy="810" r="4.500" fill="#bbb" stroke="none"/>
<g fill="#6a6a6a" stroke="none"><rect x="119" y="803" width="18" height="14"/><rect x="157" y="803" width="18" height="3"/><rect x="157" y="808" width="18" height="3"/><rect x="157" y="813" width="18" height="3"/><path d="M196 817l3-10 4 3 3-6 3 6 4-3 3 10z"/><rect x="233" y="804" width="8" height="6"/><rect x="233" y="811" width="8" height="6"/></g>
<rect x="243" y="797" width="14" height="18" rx="2" fill="#666" stroke="#777" stroke-width="1"/><path d="M246 804l4 4 4-4" stroke="#bbb"/>
<!-- wheel marker & sq handle -->
<rect x="77" y="866" width="14" height="10" transform="rotate(28 84 871)" fill="#d83030" stroke="#fff" stroke-width="2"/>
<rect x="75.500" y="864.500" width="17" height="13" transform="rotate(28 84 871)" stroke="#111" stroke-width="1"/>
<circle cx="108" cy="866" r="5" fill="#555" stroke="#fff" stroke-width="1.500"/>
<path d="M108 866m-4 0a4 4 0 014-4v8a4 4 0 01-4-4z" fill="#fff" stroke="none"/>
<!-- small colours -->
<rect x="50.500" y="967.500" width="21" height="21" rx="3" fill="#fff" stroke="#8291b8" stroke-width="3"/>
<rect x="66" y="980" width="16" height="16" fill="#fff" stroke="none"/><rect x="63" y="977" width="22" height="22" rx="3" stroke="#666" stroke-width="1"/>
<rect x="50.500" y="967.500" width="21" height="21" rx="3" fill="#fff" stroke="#8291b8" stroke-width="3"/>
<rect x="50" y="1002" width="35" height="11" rx="4" stroke="#777" stroke-width="1"/><path d="M54 1007.500h27" stroke="#fff" stroke-width="4" stroke-dasharray="5 2"/>
<rect x="22" y="853" width="21" height="21" fill="#fff" stroke="none"/><rect x="18" y="850" width="27" height="27" rx="4" stroke="#666" stroke-width="1"/>
<rect x="2.500" y="837.500" width="25" height="25" rx="3" fill="#fff" stroke="#8291b8" stroke-width="3"/>
<rect x="2" y="883" width="43" height="13" rx="4" stroke="#777" stroke-width="1"/>
<path d="M6 889.500h36" stroke="#fff" stroke-width="6" stroke-dasharray="6 3"/><path d="M9 887h36" stroke="#777" stroke-width="3" stroke-dasharray="5 6"/>
<!-- HSV boxes -->
<rect x="104" y="1002" width="10" height="10" rx="1" fill="#b5b5b5" stroke="none"/>
<rect x="144" y="1002" width="10" height="10" rx="1" fill="#b5b5b5" stroke="none"/>
<rect x="184" y="1002" width="10" height="10" rx="1" fill="#b5b5b5" stroke="none"/>
<circle cx="241" cy="1002" r="9" stroke="#aaa" stroke-width="1.500"/><path d="M238 996l9 6-9 6z" stroke="#aaa" stroke-width="1.500"/>

<!-- Tools column -->
<g stroke="#c2c2c2" stroke-width="1.800">
<circle cx="21" cy="129" r="8.500"/><path d="M27.500 135.500L34 142" stroke-width="2.500"/>
<g fill="#c6c6c6" stroke="none"><ellipse cx="23" cy="164" rx="7.500" ry="8"/></g>
<path d="M17 162L13 154M20 160L18 151M24 160V150M28 160L30 152M30 165L34 159" stroke="#c6c6c6" stroke-width="3"/>
<path d="M12 188l8-4 8 4v9l-8 5-8-5zM12 188l8 4 8-4M20 192v10" stroke-width="1.300"/>
<path d="M25 192l10 8-5 1 2 5-2 1-3-5-2 3z" fill="#c2c2c2" stroke="none"/>
<path d="M12 224h22M23 213v22" stroke-width="2"/><path d="M17 219l-6 5 6 5zM29 219l6 5-6 5zM18 218l5-6 5 6zM18 230l5 6 5-6z" fill="#c2c2c2" stroke="none"/>
<rect x="14" y="246" width="18.500" height="18.500" stroke-dasharray="3 2" stroke-width="1.300"/>
<path d="M12 298L25 287" stroke-width="2"/><path d="M27 275v20M17 285h20M20 278l14 14M34 278l-14 14" stroke-width="1.500"/><circle cx="27" cy="285" r="4" fill="#c2c2c2" stroke="none"/>
<path d="M5 303.500h38" stroke="#7a7a7a" stroke-width="1"/>
<path d="M13 331l3-8 11-11 6 6-11 11zM13 331l-1 2" stroke-width="1.500"/><path d="M26 313l5-5 4 4-5 5z" fill="#c2c2c2" stroke="none"/>
</g>
<rect x="8" y="336" width="30" height="30" fill="#606c86" stroke="#333" stroke-width="1"/>
<g stroke="#d0d0d0" stroke-width="1.500"><path d="M12 362l4-13 10-9 9 8-9 9zM12 362l10-10"/><path d="M26 340l9 8-3 3-9-8z" fill="#d0d0d0" stroke="none"/></g>
<g stroke="#c2c2c2" stroke-width="1.600">
<path d="M13 392l3-9 10-9 8 8-9 10z M13 392l9-8"/><path d="M24 376l10 6-3 4-9-7z" fill="#c2c2c2" stroke="none"/>
<path d="M13 423c0-8 5-12 11-16l6 4c-2 6-8 10-17 12z M13 423l7-8"/><circle cx="29" cy="405" r="3" fill="#c2c2c2" stroke="none"/>
<rect x="17" y="444" width="17" height="11" rx="3"/><rect x="17" y="449" width="17" height="6" fill="#ddd" stroke="none"/><path d="M22 444v-3h7v3" />
<path d="M12 433h.1M15 433h.1M18 433h.1M13 436h.1M16 436h.1M19 436h.1M14 439h.1M17 439h.1M21 437h.1M11 430h.1" stroke-width="1.500"/>
<path d="M20 464c1 6 3 8 8 9-5 1-7 3-8 9-1-6-3-8-8-9 5-1 7-3 8-9zM30 478v7M27 482h7" fill="#c6c6c6" stroke-width="1"/>
<path d="M14 512l10-10 9 7-10 9z" fill="#e0e0e0" stroke="none"/><path d="M12 513l12-12 10 8-11 10zM12 513l5 6h6M23 519h12" stroke-width="1.400"/>
<path d="M19 528c-3 5-7 8-7 12a7 7 0 0014 0c0-4-4-7-7-12zM27 528c-3 5-6 8-6 12a7 7 0 0013 0c0-4-4-7-7-12z" fill="#9c9c9c" stroke="none"/>
<rect x="12" y="557" width="22" height="22" rx="3" stroke-width="1.300"/><path d="M12 564h22M12 572h22M20 557v22M28 557c4 8 4 14 0 22" stroke-width="1.200"/>
<path d="M5 585h38" stroke="#7a7a7a" stroke-width="1"/>
<path d="M11 600l12-10 13 11-13 11z" fill="#e6e6e6" stroke="none"/><path d="M16 595l7-5 7 6H16z" fill="#555" stroke="#e6e6e6" stroke-width="1.200"/>
<rect x="13.500" y="623.500" width="19" height="19" fill="url(#g1)" stroke="#c6c6c6" stroke-width="1"/>
<circle cx="23" cy="664" r="10.500"/>
<rect x="13.500" y="686" width="19" height="18" stroke-width="1.300"/><path d="M13.500 692h19M13.500 698h10M25 692l-2 12" stroke-width="1.200"/>
<path d="M13 717h21L14 737zM19 722v5l5-5z" fill="#b9b9b9" fill-rule="evenodd" stroke="none"/>
<path d="M23 789c6 0 10-3 10-7s-5-7-10-7-11 3-11 7 4 6 8 7c-1 2-3 3-4 3 3 1 6 0 7-3z" stroke-width="1.300"/>
<path d="M15 812h11M15 812v20" stroke-width="1.500"/><rect x="12" y="809" width="5" height="5" fill="#c2c2c2" stroke="none"/><path d="M21 815l11 5-6 1-2 6z" fill="#c2c2c2" stroke="none"/>
</g>
<!-- tabs: x -->
<path d="M365 101l10 10M375 101l-10 10M490 101l10 10M500 101l-10 10M615 101l10 10M625 101l-10 10M740 101l10 10M750 101l-10 10M865 101l10 10M875 101l-10 10M990 101l10 10M1000 101l-10 10" stroke="#cfcfcf" stroke-width="1.300"/>
<circle cx="1120" cy="106.500" r="2.800" fill="#c6cbd6" stroke="none"/>
<path d="M383.500 95v24M508.500 95v24M633.500 95v24M758.500 95v24M883.500 95v24M1007.500 95v24" stroke="#3c3c3c" stroke-width="1"/>
<!-- toolbar separators -->
<path d="M294.500 62v30M412.500 62v30M482.500 62v30M612.500 62v30M712.500 62v30M813.500 62v30M852.500 62v30" stroke="#6a6a6a" stroke-width="1"/>
<path d="M258 92.500H1150" stroke="#3c3c3c" stroke-width="1"/>
<!-- logo -->
<rect x="263" y="64" width="23" height="23" rx="2" stroke="#c6c6c6"/>
<path d="M270 81c-4-2-5-7-2-10 3-4 10-4 12-1 2 3 0 8-3 9-3 1-6-1-6-3 0-3 3-4 5-3" stroke="#d0d0d0" stroke-width="2"/>
<!-- new doc, open, save -->
<path d="M307 68h13a2 2 0 012 2v11M307 68v16l5 4h9" stroke="#b8b8b8" stroke-width="1.800"/><circle cx="321" cy="84" r="5.500" fill="#c8c8c8" stroke="none"/><path d="M318 84h6M321 81v6" stroke="#444"/>
<path d="M335 86V70h6l2 3h9" stroke="#b8b8b8"/><path d="M335 86l4-10h17l-3 10z" fill="#c4c4c4" stroke="none"/><path d="M345 71l9-1m-3-3l3 3-3 3" stroke="#c4c4c4"/>
<path d="M362 85h24v-5l-6-10h-3M368 70l-6 10v5M362 80h7c0 3 10 3 11 0h6M374 66v11M370 73l4 4 4-4" stroke="#b8b8b8"/>
<path d="M394 74l4 4 4-4" stroke="#999"/>
<!-- undo redo -->
<path d="M430 71h6c6 0 7 5 7 7s-2 7-7 7h-12" stroke="#c2c2c2" stroke-width="1.500"/><path d="M424 71l8-6v12z" fill="#c2c2c2" stroke="none"/>
<path d="M470 71l-8-6v12zM464 71h-6c-6 0-7 5-7 7s2 7 7 7h12" stroke="#6e6e6e" stroke-width="1.500"/>
<!-- selection icons -->
<path d="M502 65v5M502 82v5M491 76h5M508 76h5M494 68l4 4M506 80l4 4M510 68l-4 4M498 80l-4 4M497 66l2 4M505 82l2 4M507 66l-2 4M492 71l4 2M508 79l4 2M492 81l4-2M512 71l-4 2" stroke="#b4b4b4" stroke-width="1.200"/>
<rect x="523" y="66" width="14" height="18" stroke="#737373" stroke-dasharray="2 2" stroke-width="1"/><path d="M541 70h3M541 76h4M541 82h3" stroke="#737373"/>
<path d="M561 64l12 12-12 12-12-12z" fill="#e0e0e0" stroke="none"/><path d="M552 74l9-9 9 9c-5 3-13-3-18 0z" fill="#444" stroke="none"/>
<rect x="583" y="68" width="18" height="18" stroke="#c6c6c6" stroke-width="1.200"/>
<g fill="#c6c6c6" stroke="none"><rect x="581" y="66" width="4" height="4"/><rect x="599" y="66" width="4" height="4"/><rect x="581" y="84" width="4" height="4"/><rect x="599" y="84" width="4" height="4"/><rect x="590" y="63" width="4" height="4"/><rect x="581" y="75" width="4" height="4"/><rect x="599" y="75" width="4" height="4"/><rect x="590" y="84" width="4" height="4"/></g>
<!-- checks -->
<g stroke="#767676" stroke-width="1"><rect x="622" y="66" width="19" height="19" stroke-dasharray="2 2"/><path d="M622 66l19 19M622 72l13 13M628 66l13 13"/><rect x="651" y="66" width="20" height="19" stroke-dasharray="2 2"/><path d="M671 66L651 85L671 85Z" fill="#7e7e7e" stroke="none"/><rect x="682" y="66" width="20" height="19"/><rect x="686" y="70" width="12" height="11" stroke-dasharray="2 2"/></g>
<!-- rulers -->
<path d="M722 67V88H742L722 67Z" stroke="#d2d6e0" stroke-width="1.200"/><path d="M731 77l16-14 2 3-15 14z" fill="#dfe2ea" stroke="none"/>
<path d="M751 76h24c0 7-5 12-12 12s-12-5-12-12z" stroke="#d2d6e0" stroke-width="1.200"/><path d="M760 74l15-13 2 3-13 13z" fill="#dfe2ea" stroke="none"/>
<path d="M784 88h24M787 79h22M792 70v18" stroke="#b4b4b4" stroke-width="1.100"/><path d="M792 75l14-12 2 3-13 12z" fill="#cfcfcf" stroke="none"/>
<!-- phone -->
<rect x="825" y="63" width="15" height="26" rx="2" fill="#4a4a4a" stroke="#bdbdbd" stroke-width="1.300"/><rect x="825" y="84" width="15" height="5" fill="#bdbdbd" stroke="none"/>
<g fill="#ddd" stroke="none"><rect x="828" y="67" width="2" height="2"/><rect x="831" y="67" width="2" height="2"/><rect x="834" y="67" width="2" height="2"/><rect x="828" y="71" width="2" height="2"/><rect x="831" y="71" width="2" height="2"/><rect x="834" y="71" width="2" height="2"/><rect x="828" y="75" width="2" height="2"/><rect x="831" y="75" width="2" height="2"/></g>
<!-- help -->
<path d="M876 67a9.500 9.500 0 00-11 13l-2 7 7-2a10 10 0 0013-12" stroke="#bdbdbd" stroke-width="1.300"/><path d="M879 70l4-4m-3 0h3v3" stroke="#bdbdbd"/>
<text x="869" y="82" font-size="15" font-family="Liberation Sans" fill="#bdbdbd" stroke="none" font-weight="700">?</text>
<!-- status icons -->
<path d="M593 1014a5 5 0 019-4M592 1006l1 5 4-2M625 1014a5 5 0 00-9-4M626 1006l-1 5-4-2" stroke="#aaa" stroke-width="1.200"/>
<circle cx="646" cy="1011" r="5.500" stroke="#aaa" stroke-width="1.200"/><path d="M646 1008v3" stroke="#aaa"/>
<path d="M669 1007l-3 4 3 4" stroke="#aaa" stroke-width="1.200"/>
</svg>

<!-- labels drawn over -->
<div class="t" style="left:587px;top:8px;font-size:14px;letter-spacing:-.15px;color:#a0a0a0">コミック* 9/32 (A4 210.00 x 297.00mm 製本サイズ:B5 判 182.00 x 257.00mm 600dpi 25.0%</div>
<div class="t m" style="left:16px;letter-spacing:-2px">ファイル(F)</div>
<div class="t m" style="left:103px;letter-spacing:.3px">編集(E)</div>
<div class="t m" style="left:177px;letter-spacing:-.7px">ページ管理(P)</div>
<div class="t m" style="left:287px;letter-spacing:-1.900px">アニメーション(A)</div>
<div class="t m" style="left:410px;letter-spacing:-1.700px">レイヤー(L)</div>
<div class="t m" style="left:497px;letter-spacing:.6px">選択範囲(S)</div>
<div class="t m" style="left:602px;letter-spacing:.3px">表示(V)</div>
<div class="t m" style="left:676px;letter-spacing:-1.950px">フィルター(I)</div>
<div class="t m" style="left:770px;letter-spacing:-1.950px">ウィンドウ(W)</div>
<div class="t m" style="left:874px;letter-spacing:-.6px">ヘルプ(H)</div>
<div class="br t" style="top:168px">リアルGペン</div>
<div class="br t" style="top:198px">丸ペン</div>
<div class="br t" style="top:228px">カブラペン</div>
<div class="br t" style="top:258px;text-shadow:0 0 2px #444">カリグラフィ</div>
<div style="left:166px;top:285px;width:72px;height:18px;background:#535d76"></div>
<div class="br t" style="top:288px">ざらつきペン</div>
<div class="t" style="left:107px;top:1002px;font-size:9px;font-weight:700;color:#3c3c3c">H</div>
<div class="t" style="left:147px;top:1002px;font-size:9px;font-weight:700;color:#3c3c3c">S</div>
<div class="t" style="left:186px;top:1002px;font-size:9px;font-weight:700;color:#3c3c3c">V</div>
<div class="t" style="left:129px;top:1001px;font-size:13px;color:#c4c4c4">0</div>
<div class="t" style="left:169px;top:1001px;font-size:13px;color:#c4c4c4">0</div>
<div class="t" style="left:196px;top:1001px;font-size:13px;letter-spacing:.8px;color:#c4c4c4">100</div>
<div class="t" style="left:11px;top:742px;font-size:31px;color:#bdbdbd;line-height:1">A</div>

<!-- volume popup -->
<div class="b" style="left:839px;top:953px;width:240px;height:59px;background:#f3f3f3;border:1px solid #e4e4e4;border-radius:8px;box-shadow:0 2px 8px rgba(0,0,0,.12)">
<svg width="24" height="24" viewBox="0 0 24 24" style="position:absolute;left:11px;top:17px" fill="none" stroke="#333" stroke-width="1.100"><path d="M5 9.500H8L12 6V18L8 14.500H5Z"/><path d="M15 9c1.500 2 1.500 4 0 6"/></svg>
<div style="left:51px;top:26px;width:137px;height:4px;background:#8a8a8a;border-radius:2px"></div>
<div style="left:51px;top:26px;width:19px;height:4px;background:#2d63b0;border-radius:2px"></div>
<div class="t" style="left:204px;top:21px;font-size:17px;color:#333">14</div>
</div>
</div>
</body></html>
